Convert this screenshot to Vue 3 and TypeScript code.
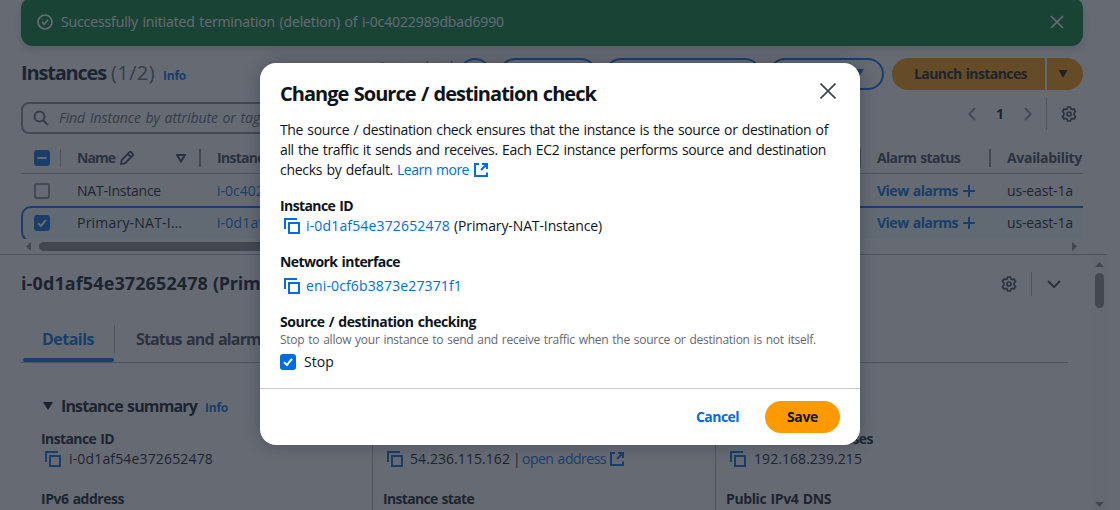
<script setup lang="ts">
import type { Directive } from 'vue'

// Tracks a run of text so that it spans the given width in pixels.
const vFit: Directive<HTMLElement, number> = {
  mounted(el, { value }) {
    const natural = el.getBoundingClientRect().width
    const count = (el.textContent ?? '').trim().length
    if (count > 0) el.style.letterSpacing = `${(value - natural) / count}px`
  },
}

interface Row { name: string; nameWidth: number; id: string; selected: boolean }
const rows: Row[] = [
  { name: 'NAT-Instance', nameWidth: 84, id: 'i-0c4022989dbad6990', selected: false },
  { name: 'Primary-NAT-I…', nameWidth: 105, id: 'i-0d1af54e372652478', selected: true },
]

const paragraph = [
  { text: 'The source / destination check ensures that the instance is the source or destination of', width: 548 },
  { text: 'all the traffic it sends and receives. Each EC2 instance performs source and destination', width: 546 },
]

const gear =
  'M6.6 1h2.8l.5 1.9 1.3.75 1.9-.55 1.4 2.4L13.1 7v2l1.4 1.5-1.4 2.4-1.9-.55-1.3.75L9.4 15H6.6l-.5-1.9-1.3-.75-1.9.55-1.4-2.4L2.9 9V7L1.5 5.5l1.4-2.4 1.9.55 1.3-.75z'
const copy = 'M1 11V1h12M5 5h10v10H5z'
const external = 'M5 1H1v12h12V9.500M8 1h5v5M13 1L7 7'
</script>

<template>
  <div class="screen">
    <div class="page">
      <div class="flash">
        <svg class="ico" viewBox="0 0 16 16"><circle cx="8" cy="8" r="7" /><path d="M5 8l2.200 2.200L11 5.800" /></svg>
        <span v-fit="443" class="flash-text">Successfully initiated termination (deletion) of i-0c4022989dbad6990</span>
        <svg class="ico flash-close" viewBox="0 0 16 16"><path d="M2 2l12 12M14 2L2 14" /></svg>
      </div>

      <div class="head">
        <span v-fit="85" class="h1">Instances</span>
        <span v-fit="44" class="counter">(1/2)</span>
        <span v-fit="23" class="info">Info</span>
        <span class="grow"></span>
        <span v-fit="72" class="updated">Last updated</span>
        <span class="pill refresh"></span>
        <span class="pill connect"></span>
        <span class="pill state"></span>
        <span class="pill actions"><svg viewBox="0 0 10 8"><path d="M0 0h10L5 8z" /></svg></span>
        <span class="launch"><span v-fit="113">Launch instances</span></span>
        <span class="launch-more"><svg viewBox="0 0 10 8"><path d="M.5 0h9L5 8z" /></svg></span>
      </div>

      <div class="filter">
        <div class="search">
          <svg class="ico" viewBox="0 0 16 16"><circle cx="6.500" cy="6.500" r="5" /><path d="M10.200 10.200L15 15" /></svg>
          <span v-fit="201">Find Instance by attribute or tag</span>
        </div>
        <div class="pager">
          <svg class="arrow" viewBox="0 0 8 14"><path d="M7 1L1.200 7 7 13" /></svg>
          <b>1</b>
          <svg class="arrow" viewBox="0 0 8 14"><path d="M1 1l5.800 6L1 13" /></svg>
          <i></i>
          <svg class="ico" viewBox="0 0 16 16"><path :d="gear" /><circle cx="8" cy="8" r="2" /></svg>
        </div>
      </div>

      <div class="table">
        <div class="tr th">
          <div class="check"><span class="box on"><svg viewBox="0 0 16 16"><path d="M3.500 8h9" /></svg></span><i class="sep thin"></i></div>
          <div class="name">
            <span v-fit="38">Name</span>
            <svg class="ico pencil" viewBox="0 0 16 16"><path d="M2 14l.7-4L10.500 2.200q.8-.8 1.600 0l1.700 1.700q.8.8 0 1.600L6 13.300zM9 4l3 3" /></svg>
            <svg class="sort" viewBox="0 0 10 9"><path d="M1 1h8L5 7.500z" /></svg>
            <i class="sep"></i>
          </div>
          <div class="id"><span v-fit="72">Instance ID</span><i class="sep"></i></div>
          <div class="alarm"><span v-fit="83">Alarm status</span><i class="sep"></i></div>
          <div class="zone"><span v-fit="75">Availability</span></div>
        </div>
        <div v-for="r in rows" :key="r.id" class="tr" :class="{ selected: r.selected }">
          <div class="check"><span class="box" :class="{ on: r.selected }"><svg v-if="r.selected" viewBox="0 0 16 16"><path d="M4 8.200l2.900 2.800L12 4.800" /></svg></span></div>
          <div class="name"><span v-fit="r.nameWidth">{{ r.name }}</span></div>
          <div class="id link"><span v-fit="144">{{ r.id }}</span></div>
          <div class="alarm link"><b v-fit="81">View alarms</b><svg viewBox="0 0 12 12"><path d="M6 0v12M0 6h12" /></svg></div>
          <div class="zone"><span v-fit="66">us-east-1a</span></div>
        </div>
      </div>

      <div class="hscroll">
        <svg viewBox="0 0 5 9"><path d="M5 0v9L0 4.500z" /></svg>
        <span></span>
        <svg viewBox="0 0 5 9"><path d="M0 0v9l5-4.500z" /></svg>
      </div>

      <div class="panel">
        <div class="content">
          <div class="panel-head">
            <span v-fit="187">i-0d1af54e372652478</span>
            <span v-fit="204">(Primary-NAT-Instance)</span>
            <span class="grow"></span>
            <svg class="ico" viewBox="0 0 16 16"><path :d="gear" /><circle cx="8" cy="8" r="2" /></svg>
            <i></i>
            <svg class="chev" viewBox="0 0 14 8"><path d="M1 1l6 6 6-6" /></svg>
          </div>
          <div class="tabs">
            <div class="tab active"><span v-fit="52">Details</span></div>
            <div class="tab"><span v-fit="132">Status and alarms</span></div>
          </div>
          <div class="summary">
            <svg viewBox="0 0 10 8"><path d="M0 0h10L5 8z" /></svg>
            <span v-fit="136" class="h3">Instance summary</span>
            <span v-fit="23" class="info">Info</span>
          </div>
          <div class="cols">
            <div class="col">
              <div class="label"><span v-fit="73">Instance ID</span></div>
              <div class="value">
                <svg class="copy" viewBox="0 0 16 16"><path :d="copy" /></svg>
                <span v-fit="144">i-0d1af54e372652478</span>
              </div>
              <div class="label next"><span v-fit="83">IPv6 address</span></div>
            </div>
            <div class="col second">
              <div class="label"><span v-fit="128">Public IPv4 address</span></div>
              <div class="value">
                <svg class="copy" viewBox="0 0 16 16"><path :d="copy" /></svg>
                <span v-fit="100">54.236.115.162</span><span class="bar">|</span>
                <span v-fit="84" class="link">open address</span>
                <svg class="ext" viewBox="0 0 14 14"><path :d="external" /></svg>
              </div>
              <div class="label next"><span v-fit="91">Instance state</span></div>
            </div>
            <div class="col">
              <div class="label"><span v-fit="147">Private IPv4 addresses</span></div>
              <div class="value">
                <svg class="copy" viewBox="0 0 16 16"><path :d="copy" /></svg>
                <span v-fit="108">192.168.239.215</span>
              </div>
              <div class="label next"><span v-fit="105">Public IPv4 DNS</span></div>
            </div>
          </div>
        </div>
        <div class="vscroll">
          <svg viewBox="0 0 9 5"><path d="M0 5h9L4.500 0z" /></svg>
          <span></span>
          <svg viewBox="0 0 9 5"><path d="M0 0h9L4.500 5z" /></svg>
        </div>
      </div>
    </div>

    <div class="overlay">
      <div class="modal">
        <div class="modal-head">
          <span v-fit="316">Change Source / destination check</span>
          <svg viewBox="0 0 16 16"><path d="M.5.5l15 15M15.500.5l-15 15" /></svg>
        </div>
        <div class="para">
          <div v-for="p in paragraph" :key="p.text"><span v-fit="p.width">{{ p.text }}</span></div>
          <div class="last">
            <span v-fit="113">checks by default.</span>
            <span v-fit="72" class="link">Learn more</span>
            <svg class="ext" viewBox="0 0 14 14"><path :d="external" /></svg>
          </div>
        </div>
        <div class="field">
          <div class="label"><span v-fit="73">Instance ID</span></div>
          <div class="value">
            <svg class="copy" viewBox="0 0 16 16"><path :d="copy" /></svg>
            <span v-fit="144" class="link">i-0d1af54e372652478</span>
            <span v-fit="148" class="paren">(Primary-NAT-Instance)</span>
          </div>
        </div>
        <div class="field eni">
          <div class="label"><span v-fit="120">Network interface</span></div>
          <div class="value">
            <svg class="copy" viewBox="0 0 16 16"><path :d="copy" /></svg>
            <span v-fit="156" class="link">eni-0cf6b3873e27371f1</span>
          </div>
        </div>
        <div class="field checking">
          <div class="label"><span v-fit="196">Source / destination checking</span></div>
          <div class="hint"><span v-fit="536">Stop to allow your instance to send and receive traffic when the source or destination is not itself.</span></div>
          <div class="stop">
            <span class="box on"><svg viewBox="0 0 16 16"><path d="M4 8.200l2.900 2.800L12 4.800" /></svg></span>
            <span v-fit="30">Stop</span>
          </div>
        </div>
        <div class="footer">
          <b v-fit="43" class="cancel">Cancel</b>
          <span class="save"><b v-fit="31">Save</b></span>
        </div>
      </div>
    </div>
  </div>
</template>

<style>
body { margin: 0; overflow: hidden; }
</style>

<style scoped>
* { box-sizing: border-box; }
.screen { position: relative; width: 1120px; height: 510px; overflow: hidden; background: #fff; color: #0f141a; font: 14px/20px "Open Sans", "Noto Sans", sans-serif; word-spacing: 1px; white-space: nowrap; }
.page { display: flex; flex-direction: column; height: 510px; }
svg { display: block; flex: none; fill: none; stroke: currentColor; stroke-width: 2; }
.grow { flex: 1; }
.ico { width: 16px; height: 16px; }
.link { color: #006ce0; }
.info { color: #006ce0; font-weight: 700; font-size: 12px; }

.flash { flex: none; display: flex; align-items: center; height: 49px; margin: -3px 37px 0 21px; padding: 0 18px 0 16px; border-radius: 12px; background: #00802f; color: #fff; box-shadow: 0 3px 8px rgba(0, 7, 22, .2); }
.flash .ico { stroke-width: 1.7; }
.flash-text { margin-left: 8px; }
.flash-close { margin-left: auto; }

.head { flex: none; display: flex; align-items: center; height: 32px; margin: 12px 37px 0 21px; }
.h1 { font-size: 20px; font-weight: 700; padding-bottom: 2px; }
.counter { font-size: 20px; color: #656871; margin-left: 5px; padding-bottom: 2px; }
.head .info { margin-left: 8px; padding-top: 4px; }
.updated { font-size: 12px; color: #424650; margin-right: 6px; padding-bottom: 14px; }
.pill { height: 32px; border: 2px solid #006ce0; border-radius: 16px; color: #006ce0; margin-right: 8px; }
.refresh { width: 32px; }
.connect { width: 98px; }
.state { width: 156px; }
.actions { width: 115px; display: flex; align-items: center; justify-content: flex-end; padding-right: 18px; }
.pill svg, .launch-more svg { width: 10px; height: 8px; fill: currentColor; stroke: none; }
.pill svg { margin-bottom: 2px; }
.launch, .launch-more { display: flex; align-items: center; justify-content: center; height: 32px; background: #f90; font-weight: 700; }
.launch { width: 153px; border-radius: 16px 0 0 16px; margin-right: 2px; padding-left: 4px; }
.launch-more { width: 36px; border-radius: 0 16px 16px 0; padding-right: 4px; }

.filter { flex: none; display: flex; height: 53px; padding-top: 12px; margin: 0 37px 0 21px; }
.search { display: flex; align-items: center; width: 500px; height: 32px; border: 2px solid #8c8c94; border-radius: 8px; padding-left: 10px; color: #656871; font-style: italic; }
.search span { margin-left: 10px; }
.search .ico { color: #656871; }
.pager { display: flex; align-items: center; height: 32px; margin: -4px 6px 0 auto; }
.pager .arrow { width: 8px; height: 14px; color: #8c8c94; stroke-width: 1.8; }
.pager b { width: 8px; margin: 0 20px; }
.pager i { width: 1px; height: 32px; margin: 0 14px; background: #b4b4bb; }
.pager .ico { color: #424650; stroke-width: 1.7; }

.table { flex: none; width: 1062px; height: 96px; margin-left: 21px; overflow: hidden; }
.tr { display: flex; height: 33px; align-items: center; }
.tr > div { position: relative; display: flex; align-items: center; height: 100%; }
.th { height: 31px; border-bottom: 1px solid #b4b4bb; color: #424650; font-weight: 700; }
.check { width: 56px; padding-left: 13px; }
.name { width: 140px; }
.id { width: 660px; }
.alarm { width: 130px; }
.alarm svg { width: 12px; height: 12px; margin-left: 5px; }
.sep { position: absolute; right: 16px; top: 6px; width: 2px; height: 18px; background: #8c8c94; }
.thin { width: 1px; background: #b4b4bb; }
.pencil { margin-left: 4px; stroke-width: 1.8; }
.sort { position: absolute; right: 31px; top: 11px; width: 10px; height: 9px; }
.selected { background: #f0fbff; border: 2px solid #006ce0; border-right: 0; border-radius: 10px 0 0 10px; height: 36px; padding-bottom: 2px; margin-top: -1px; }
.selected .check { width: 54px; padding-left: 11px; }
.box { display: block; width: 16px; height: 16px; border: 2px solid #8c8c94; border-radius: 3px; flex: none; }
.on { border: 0; background: #006ce0; color: #fff; }
.on svg { width: 16px; height: 16px; }

.hscroll { flex: none; display: flex; align-items: center; height: 15px; width: 1051px; margin-left: 26px; color: #8b8b8b; }
.hscroll svg { width: 5px; height: 9px; fill: currentColor; stroke: none; }
.hscroll span { height: 9px; width: 700px; margin: 0 auto 0 8px; border-radius: 5px; background: #8b8b8b; }

.panel { display: flex; height: 256px; width: 1107px; border-top: 1px solid #b4b4bb; }
.content { width: 1047px; margin-left: 21px; }
.panel-head { display: flex; align-items: center; height: 58px; margin-right: 7px; font-size: 18px; font-weight: 700; }
.panel-head span { padding-bottom: 2px; }
.panel-head span + span { margin-left: 5px; }
.panel-head .ico { color: #424650; stroke-width: 1.7; }
.panel-head i { width: 1px; height: 24px; margin: 0 15px 0 14px; background: #b4b4bb; }
.panel-head .chev { width: 14px; height: 8px; color: #424650; }
.tabs { display: flex; height: 50px; border-bottom: 1px solid #b4b4bb; font-size: 16px; font-weight: 700; color: #424650; }
.tab { position: relative; padding: 16px 20px 0 21px; }
.active { width: 94px; color: #006ce0; }
.active::before { content: ""; position: absolute; right: 0; top: 12px; width: 1px; height: 28px; background: #b4b4bb; }
.active::after { content: ""; position: absolute; left: 2px; right: 1px; bottom: 0; height: 4px; border-radius: 2px; background: #006ce0; }
.summary { display: flex; align-items: center; height: 24px; margin: 31px 0 0 22px; }
.summary svg { width: 10px; height: 8px; fill: currentColor; stroke: none; }
.h3 { font-size: 16px; font-weight: 700; margin-left: 8px; }
.summary .info { margin-left: 8px; padding-top: 3px; }
.cols { display: flex; margin-top: 11px; }
.col { width: 343px; height: 90px; padding-left: 10px; border-left: 1px solid #b4b4bb; }
.col:first-child { width: 351px; padding-left: 19px; border-left-color: transparent; }
.col:last-child { width: 300px; }
.second .copy { margin-right: 7px; }
.label { font-weight: 700; height: 20px; }
.next { margin-top: 20px; }
.value { display: flex; align-items: center; height: 20px; }
.copy { width: 16px; height: 16px; margin: 0 8px 0 4px; color: #006ce0; }
.bar { margin: 0 4px 0 3px; width: 5px; }
.ext { width: 14px; height: 14px; margin-left: 4px; color: #006ce0; }
.vscroll { display: flex; flex-direction: column; align-items: center; width: 15px; margin-left: auto; padding: 7px 0 3px; color: #8b8b8b; background: #fcfcfc; }
.vscroll svg { width: 9px; height: 5px; fill: currentColor; stroke: none; }
.vscroll span { width: 9px; height: 35px; margin: 6px 0 auto; border-radius: 5px; background: #8b8b8b; }

.overlay { position: absolute; inset: 0; padding: 63px 260px; background: rgba(35, 43, 55, .7); }
.modal { width: 600px; height: 382px; border-radius: 16px; background: #fff; box-shadow: 0 0 16px rgba(0, 7, 22, .25); }
.modal-head { display: flex; justify-content: space-between; height: 57px; padding: 19px 24px 0 20px; font-size: 20px; line-height: 24px; font-weight: 700; }
.modal-head svg { width: 16px; height: 16px; margin-top: 1px; color: #424650; stroke-width: 1.7; }
.para { padding-left: 20px; }
.last { display: flex; align-items: center; }
.last .link { margin-left: 4px; }
.last .ext { margin-left: 5px; }
.field { padding: 16px 0 0 20px; }
.field .copy { margin-right: 6px; }
.paren { margin-left: 4px; }
.eni .value { margin-top: 4px; }
.hint { height: 16px; font-size: 12px; line-height: 16px; color: #656871; }
.stop { display: flex; align-items: center; height: 20px; margin-top: 4px; }
.stop > span + span { margin-left: 8px; }
.footer { display: flex; justify-content: flex-end; align-items: center; height: 57px; margin-top: 16px; padding-right: 20px; border-top: 1px solid #c6c6cd; }
.cancel { color: #006ce0; margin-right: 26px; }
.save { display: flex; align-items: center; justify-content: center; width: 75px; height: 32px; border-radius: 16px; background: #f90; }
</style>
